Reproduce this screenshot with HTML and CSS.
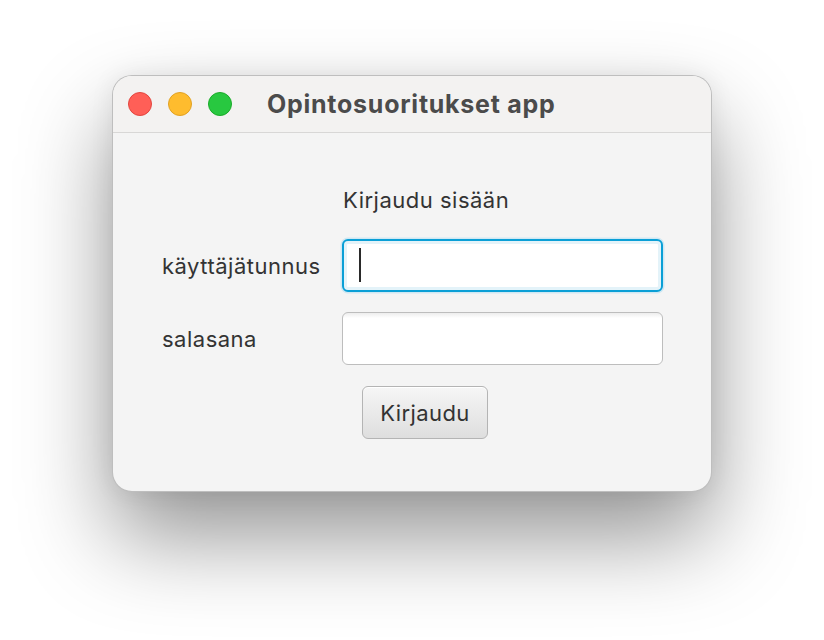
FILE: index.html
```html
<!DOCTYPE html>
<html lang="fi">
<head>
<meta charset="utf-8">
<title>Opintosuoritukset app</title>
<link rel="stylesheet" href="styles.css">
</head>
<body>
  <div class="window">
    <div class="titlebar">
      <div class="lights">
        <span class="light red"></span>
        <span class="light yellow"></span>
        <span class="light green"></span>
      </div>
      <div class="title">Opintosuoritukset app</div>
    </div>
    <div class="content">
      <div class="grid">
        <div class="heading">Kirjaudu sisään</div>
        <label class="label">käyttäjätunnus</label>
        <div class="field focused"><span class="caret"></span></div>
        <label class="label">salasana</label>
        <div class="field"></div>
        <div class="btn-cell"><button class="btn">Kirjaudu</button></div>
      </div>
    </div>
  </div>
</body>
</html>
```

FILE: styles.css
```css
html, body {
  margin: 0;
  padding: 0;
  background: #ffffff;
  width: 824px;
  height: 640px;
  overflow: hidden;
  font-family: Inter, "Liberation Sans", sans-serif;
}

body {
  padding: 75px 0 0 112px;
  box-sizing: border-box;
}

.window {
  width: 600px;
  height: 417px;
  box-sizing: border-box;
  border-radius: 20px;
  background: #f4f4f4;
  border: 1px solid rgba(0, 0, 0, 0.22);
  box-shadow: 0 45px 90px 0 rgba(0, 0, 0, 0.42), 0 0 24px rgba(0, 0, 0, 0.07);
  overflow: hidden;
  display: flex;
  flex-direction: column;
}

.titlebar {
  height: 56px;
  flex: none;
  background: #f3f2f1;
  border-bottom: 1px solid #d8d7d6;
  display: flex;
  align-items: center;
  padding-left: 15px;
}

.lights {
  display: flex;
  gap: 16px;
}

.light {
  width: 24px;
  height: 24px;
  border-radius: 50%;
  box-sizing: border-box;
}

.red { background: #ff5f57; border: 1px solid #e2463f; }
.yellow { background: #febc2e; border: 1px solid #e1a123; }
.green { background: #28c840; border: 1px solid #1aab29; }

.title {
  margin-left: 35px;
  font-weight: 700;
  font-size: 25px;
  color: #4b4b4b;
  letter-spacing: 0.75px;
}

.content {
  flex: 1;
  padding: 52px 0 0 49px;
}

.grid {
  display: grid;
  grid-template-columns: 180px 321px;
  grid-template-rows: 34px 53px 53px 53px;
  row-gap: 20px;
  color: #333333;
  font-size: 22px;
  letter-spacing: 0.5px;
}

.heading {
  grid-column: 2;
  line-height: 30px;
  padding-left: 1px;
}

.label {
  display: flex;
  align-items: center;
}

.field {
  box-sizing: border-box;
  border: 1.5px solid #bdbdbd;
  border-radius: 6px;
  background: linear-gradient(#ededed 0, #ffffff 5px);
  position: relative;
}

.field.focused {
  border: 2.5px solid #0a9fd6;
  background: #ffffff;
  box-shadow: 0 0 0 1.5px #cfe8f3, inset 0 0 0 3px #e4f3f9;
}

.caret {
  position: absolute;
  left: 15px;
  top: 7px;
  width: 2px;
  height: 34px;
  background: #2a2a2a;
}

.btn-cell {
  grid-column: 2;
  padding-left: 20px;
  margin-top: 1px;
}

.btn {
  height: 53px;
  width: 126px;
  box-sizing: border-box;
  font-family: inherit;
  font-size: 22px;
  letter-spacing: 0.4px;
  color: #333333;
  border: 1.5px solid #b4b4b4;
  border-radius: 6px;
  background: linear-gradient(#f6f6f6, #dedede);
  box-shadow: inset 0 1px 0 #ffffff;
  padding: 0;
}
```
